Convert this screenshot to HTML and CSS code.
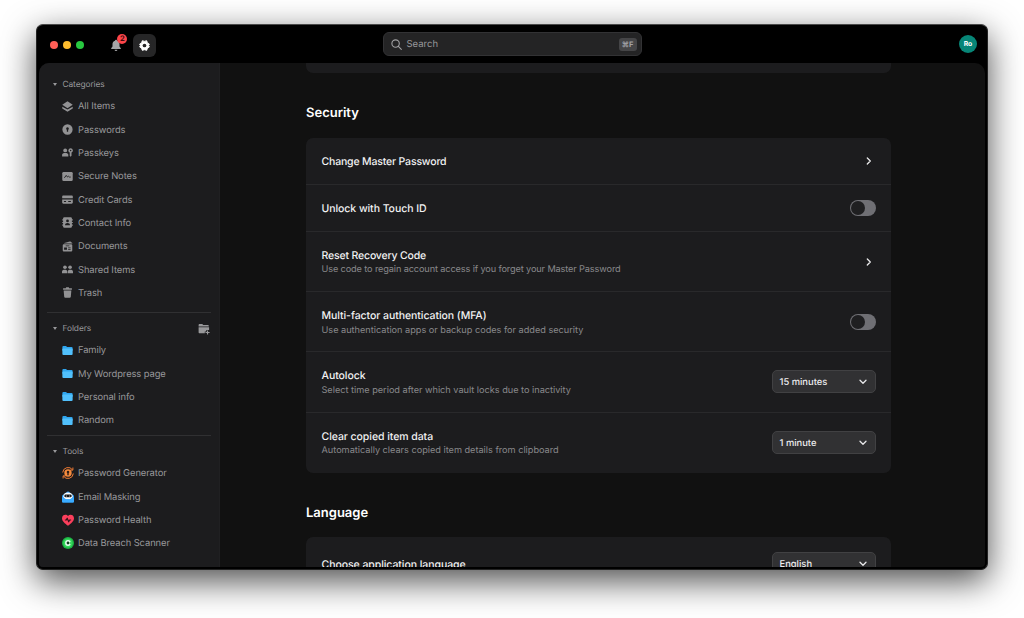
FILE: index.html
```html
<!DOCTYPE html>
<html>
<head>
	<meta charset="utf-8">
	<title>Settings</title>
	<link rel="stylesheet" href="styles.css">
</head>
<body>
<div class="window">
	<div class="topbar">
		<div class="left">
			<span class="dot red"></span>
			<span class="dot yellow"></span>
			<span class="dot green"></span>
			<div class="bell">
				<svg width="12" height="13" viewBox="0 0 12 13"><path fill="#a5a5a7" d="M6 .8c.6 0 1 .4 1 .9 1.600.4 2.500 1.700 2.500 3.300v2.600l1.300 1.700v.7H1.200v-.7l1.300-1.700V5c0-1.600.9-2.900 2.500-3.300 0-.5.4-.9 1-.9zM4.600 10.700h2.800a1.400 1.400 0 0 1-2.800 0z"/></svg>
				<b class="count">2</b>
			</div>
			<div class="gear">
				<svg width="13" height="13" viewBox="0 0 12 12"><path fill="#fff" stroke="#fff" stroke-width=".8" stroke-linejoin="round" d="M4 1.500Q6 2.700 8 1.500Q8.200 3.700 10.500 4.700Q9.100 6 10.500 7.300Q8.200 8.300 8 10.500Q6 9.300 4 10.500Q3.800 8.300 1.500 7.300Q2.900 6 1.500 4.700Q3.800 3.700 4 1.500z"/><circle cx="6" cy="6" r="1.700" fill="#262627"/></svg>
			</div>
		</div>
		<div class="search">
			<svg width="11" height="11" viewBox="0 0 11 11" fill="none" stroke="#a2a2a4" stroke-width="1.100" stroke-linecap="round"><circle cx="4.600" cy="4.600" r="3.700"/><path d="M7.400 7.400l2.900 2.900"/></svg>
			<span>Search</span>
			<b class="key">⌘F</b>
		</div>
		<div class="right"><span class="avatar">Ro</span></div>
	</div>

	<div class="main">
		<div class="sidebar">
			<div class="label"><i class="tri"></i>Categories</div>
			<ul>
				<li><svg viewBox="0 0 12 12"><path d="M6 .4l5.700 3.700L6 7.800.3 4.100z"/><path d="M.3 6.300L6 9.400l5.700-3.100v1.900L6 11.800.3 8.200z"/></svg>All Items</li>
				<li><svg viewBox="0 0 12 12"><path fill-rule="evenodd" d="M6 .4a5.600 5.600 0 1 1 0 11.200A5.600 5.600 0 0 1 6 .4zM6 3.500a1.500 1.500 0 0 0-.7 2.800V8.500h1.400V6.300A1.500 1.500 0 0 0 6 3.500z"/></svg>Passwords</li>
				<li><svg viewBox="0 0 12 12"><circle cx="3.500" cy="3.700" r="2.100"/><path d="M.1 10.300V8.700c0-1.400 1.400-2.100 3.400-2.100s3.400.7 3.400 2.100v1.600z"/><path fill-rule="evenodd" d="M9.400 1.500a2.400 2.400 0 0 1 1 4.600V9.500l-1 1.100-1-1.100V6.100a2.400 2.400 0 0 1 1-4.600zm0 1.400a.8.8 0 1 0 0 1.600.8.8 0 0 0 0-1.600z"/></svg>Passkeys</li>
				<li><svg viewBox="0 0 12 12"><rect x=".3" y="1" width="11.400" height="10" rx="1.500"/><path class="cut" d="M2.600 7.400l2-2.600 1.500 1.800 1-.9 1 .9h1.400"/></svg>Secure Notes</li>
				<li><svg viewBox="0 0 12 12"><path d="M.2 4.600V3c0-.8.5-1.300 1.300-1.300h9c.8 0 1.300.5 1.300 1.300v1.600z"/><path fill-rule="evenodd" d="M.2 5.900h11.600v3.400c0 .8-.5 1.300-1.300 1.300h-9c-.8 0-1.300-.5-1.300-1.300zM2.100 7.700v1h2.300v-1zm4.700 0v1h2.900v-1z"/></svg>Credit Cards</li>
				<li><svg viewBox="0 0 12 12"><path d="M.3 2.500h11.500v1.200H.3zM.3 5.400h11.500v1.200H.3zM.3 8.300h11.500v1.200H.3z"/><rect x="1.200" y=".3" width="9.600" height="11.400" rx="1.400"/><circle cx="6" cy="4.300" r="1.500" fill="#1c1c1e"/><path fill="#1c1c1e" d="M3.300 9c0-1.700 1-2.500 2.700-2.500s2.700.8 2.700 2.500z"/></svg>Contact Info</li>
				<li><svg viewBox="0 0 12 12"><path d="M2.500 2.100L8.500.5c.9-.2 1.400.2 1.600.9l1.200.7v.6H2.300z"/><path fill-rule="evenodd" d="M.8 4.600c0-.7.4-1.100 1.100-1.100h8.200c.7 0 1.100.4 1.100 1.100v5.800c0 .7-.4 1.100-1.100 1.100H1.900c-.7 0-1.100-.4-1.100-1.100zM4 4.800v1h4v-1zm-1.700 2.300v2.500h3.100V7.100zm4.400 0v.9h2.700v-.9zm0 1.700v.8h2.700v-.8z"/></svg>Documents</li>
				<li><svg viewBox="0 0 12 12"><circle cx="3.200" cy="3.500" r="2"/><circle cx="8.800" cy="3.500" r="2"/><path d="M0 10.200V8.500c0-1.400 1.200-2.100 3-2.100s2.700.7 2.700 2.100v1.700zM6.300 10.200V8.500c0-1.400.9-2.100 2.700-2.100s3 .7 3 2.100v1.700z"/></svg>Shared Items</li>
				<li><svg viewBox="0 0 12 12"><path d="M4.100 1.400L4.600.4h2.800l.5 1h2.900v1.600H1.200V1.400zM1.800 3.900h8.400l-.6 6.600c-.1.700-.5 1.100-1.200 1.100H3.600c-.7 0-1.100-.4-1.200-1.100z"/></svg>Trash</li>
			</ul>
			<hr>
			<div class="label"><i class="tri"></i>Folders
				<svg class="add" width="12" height="12" viewBox="0 0 12 12"><path fill="#98989a" d="M.6 2c0-.7.4-1.100 1.100-1.100h2.500l1.100 1.200h4.400c.7 0 1.100.4 1.100 1v.4H.6zM.6 4.200h10.500V7H8.300v1.500H6.800v1.800H1.700c-.7 0-1.100-.4-1.100-1.100zM9 7.500h1.100v1.400h1.500V10h-1.500v1.500H9V10H7.500V8.900H9z"/></svg>
			</div>
			<ul class="folders">
				<li><svg viewBox="0 0 12 12"><path fill="#2fa5ee" d="M.4 2.200c0-.7.400-1.100 1.100-1.100h2.900l1.100 1.200h5c.7 0 1.100.4 1.100 1v3H.4z"/><rect x=".4" y="3.700" width="11.200" height="7.300" rx="1.100" fill="#51c0fc"/></svg>Family</li>
				<li><svg viewBox="0 0 12 12"><path fill="#2fa5ee" d="M.4 2.200c0-.7.400-1.100 1.100-1.100h2.900l1.100 1.200h5c.7 0 1.100.4 1.100 1v3H.4z"/><rect x=".4" y="3.700" width="11.200" height="7.300" rx="1.100" fill="#51c0fc"/></svg>My Wordpress page</li>
				<li><svg viewBox="0 0 12 12"><path fill="#2fa5ee" d="M.4 2.200c0-.7.400-1.100 1.100-1.100h2.900l1.100 1.200h5c.7 0 1.100.4 1.100 1v3H.4z"/><rect x=".4" y="3.700" width="11.200" height="7.300" rx="1.100" fill="#51c0fc"/></svg>Personal info</li>
				<li><svg viewBox="0 0 12 12"><path fill="#2fa5ee" d="M.4 2.200c0-.7.400-1.100 1.100-1.100h2.900l1.100 1.200h5c.7 0 1.100.4 1.100 1v3H.4z"/><rect x=".4" y="3.700" width="11.200" height="7.300" rx="1.100" fill="#51c0fc"/></svg>Random</li>
			</ul>
			<hr class="second">
			<div class="label"><i class="tri"></i>Tools</div>
			<ul class="tools">
				<li><svg viewBox="0 0 12 12"><path fill="none" stroke="#f07b35" d="M10.500 2.800A5.400 5.400 0 0 0 .7 5.500M1.500 9.200a5.400 5.400 0 0 0 9.800-2.700M8.300 3.100h2.600V.5M3.700 8.900H1.100v2.600"/><circle cx="6" cy="6" r="3.700" fill="#f78b3d"/><path fill="#2a1c17" d="M6 3.700a1.300 1.300 0 0 1 .7 2.400v2.100H5.300V6.100A1.300 1.300 0 0 1 6 3.700z"/></svg>Password Generator</li>
				<li><svg viewBox="0 0 12 12"><path fill="#2196f3" d="M6 .2l5.200 3.700c.5.4.8.8.8 1.400v4.900c0 .9-.5 1.400-1.400 1.400H1.400C.5 11.600 0 11.100 0 10.200V5.300c0-.6.3-1 .8-1.400z"/><path fill="#fff" d="M1.300 5.300c0-2.400 1.900-3.800 4.700-3.800s4.700 1.400 4.700 3.800c0 1.900-2 3.300-4.700 3.300S1.300 7.200 1.300 5.300z"/><rect x="2.300" y="3.500" width="7.400" height="2.800" rx="1.400" fill="#16181b"/><circle cx="4.300" cy="4.900" r=".5" fill="#fff"/><circle cx="7.700" cy="4.900" r=".5" fill="#fff"/><path fill="#3aabff" d="M0 6.300l4.300 2.200L6 7.900l1.700.6L12 6.300v3.900c0 .9-.5 1.400-1.400 1.400H1.400C.5 11.600 0 11.100 0 10.200z"/></svg>Email Masking</li>
				<li><svg viewBox="0 0 12 12"><path fill="#fb3f5c" d="M6 2C7.600-.1 12 .6 12 4.200 12 7.200 9 9.500 6 11.700 3 9.500 0 7.200 0 4.200 0 .6 4.400-.1 6 2z"/><path fill="none" stroke="#32131a" stroke-width="1.200" stroke-linejoin="round" d="M2.900 6h1.400l.9-1.800 1.500 3.600.9-1.800h1.500"/></svg>Password Health</li>
				<li><svg viewBox="0 0 12 12"><circle cx="6" cy="6" r="6" fill="#1cb744"/><circle cx="6" cy="6" r="4.600" fill="#35d65c"/><circle cx="6" cy="6" r="2.900" fill="#e8fff0"/><circle cx="6" cy="6" r="1.400" fill="#123d20"/><path fill="#35d65c" d="M7 6l3-2.200v4.400z"/></svg>Data Breach Scanner</li>
			</ul>
		</div>

		<div class="content">
			<div class="card prev"></div>
			<h2>Security</h2>
			<div class="card">
				<div class="row">
					<p class="name tight">Change Master Password</p>
					<svg class="go" width="6" height="8" viewBox="0 0 6 8"><path d="M1.300 1l3 3-3 3"/></svg>
				</div>
				<div class="row">
					<p class="name">Unlock with Touch ID</p>
					<span class="toggle"></span>
				</div>
				<div class="row tall">
					<div>
						<p class="name tight">Reset Recovery Code</p>
						<p class="info tight">Use code to regain account access if you forget your Master Password</p>
					</div>
					<svg class="go" width="6" height="8" viewBox="0 0 6 8"><path d="M1.300 1l3 3-3 3"/></svg>
				</div>
				<div class="row tall">
					<div>
						<p class="name">Multi-factor authentication (MFA)</p>
						<p class="info">Use authentication apps or backup codes for added security</p>
					</div>
					<span class="toggle"></span>
				</div>
				<div class="row tall">
					<div>
						<p class="name">Autolock</p>
						<p class="info">Select time period after which vault locks due to inactivity</p>
					</div>
					<div class="select">15 minutes<svg width="8" height="6" viewBox="0 0 8 6"><path d="M1 1.300l3 3 3-3"/></svg></div>
				</div>
				<div class="row tall">
					<div>
						<p class="name">Clear copied item data</p>
						<p class="info">Automatically clears copied item details from clipboard</p>
					</div>
					<div class="select">1 minute<svg width="8" height="6" viewBox="0 0 8 6"><path d="M1 1.300l3 3 3-3"/></svg></div>
				</div>
			</div>
			<h2>Language</h2>
			<div class="card">
				<div class="row lang">
					<p class="name">Choose application language</p>
					<div class="select">English<svg width="8" height="6" viewBox="0 0 8 6"><path d="M1 1.300l3 3 3-3"/></svg></div>
				</div>
			</div>
		</div>
	</div>
</div>
</body>
</html>
```
FILE: styles.css
```css
*{
	box-sizing:border-box;
}
body{
	margin:0;
	height:618px;
	background:#fff;
	font-family:Inter,"Liberation Sans",sans-serif;
	text-rendering:geometricPrecision;
	overflow:hidden;
	padding:24px 36px;
}
ul,p,h2{
	margin:0;
	padding:0;
	list-style:none;
}
.window{
	width:952px;
	height:546px;
	background:#000;
	border:1px solid #232323;
	border-top-color:#4a4a4a;
	border-radius:7px;
	padding:0 2px 2px;
	display:flex;
	flex-direction:column;
	box-shadow:0 11px 34px rgba(0,0,0,.7);
}
.topbar{
	height:38px;
	flex:none;
	display:grid;
	grid-template-columns:1fr 259px 1fr;
	align-items:center;
}
.left{
	display:flex;
	align-items:center;
	padding-left:10.700px;
	padding-top:2px;
}
.dot{
	width:8px;
	height:8px;
	border-radius:50%;
	margin-right:5px;
}
.red{background:#ff5f57;}
.yellow{background:#febc2e;}
.green{background:#28c840;}
.bell{
	position:relative;
	width:12px;
	height:13px;
	margin-left:21.800px;
	margin-right:10.500px;
}
.bell svg,.gear svg{
	display:block;
}
.count{
	position:absolute;
	left:7px;
	top:-5px;
	width:10px;
	height:10px;
	border-radius:50%;
	background:#fd4549;
	color:#3b0c0d;
	font-size:7.500px;
	line-height:10px;
	text-align:center;
}
.gear{
	width:23px;
	height:23px;
	border-radius:6px;
	background:#262627;
	display:flex;
	align-items:center;
	justify-content:center;
}
.search{
	height:24px;
	background:#242425;
	border:1px solid #323234;
	border-radius:6px;
	display:flex;
	align-items:center;
	padding:0 4px 0 7px;
	font-size:9.500px;
	color:#98989b;
}
.search span{
	margin-left:5px;
	flex:1;
}
.key{
	width:18px;
	height:13px;
	border-radius:3px;
	background:#454547;
	color:#a3a3a6;
	font-size:7.500px;
	line-height:13px;
	text-align:center;
}
.right{
	display:flex;
	justify-content:flex-end;
	padding-right:8px;
}
.avatar{
	width:18px;
	height:18px;
	border-radius:50%;
	background:#078677;
	color:#fff;
	font-size:6.800px;
	font-weight:700;
	line-height:18px;
	text-align:center;
}
.main{
	flex:1;
	min-height:0;
	display:flex;
	background:#111;
	border-radius:10px 10px 4px 4px;
	overflow:hidden;
}
.sidebar{
	width:181px;
	flex:none;
	background:#1c1c1e;
	border-right:1px solid #202022;
	padding:11.800px 8px 0 8px;
}
.label{
	height:20.330px;
	display:flex;
	align-items:center;
	padding-left:6px;
	font-size:8.400px;
	letter-spacing:-.1px;
	color:#98989b;
}
.tri{
	border:2px solid transparent;
	border-top:3px solid #98989b;
	border-bottom:0;
	margin-right:5.500px;
}
.add{
	margin-left:auto;
	margin-right:1px;
}
.sidebar li{
	height:23.330px;
	display:flex;
	align-items:center;
	padding-left:15px;
	font-size:9.400px;
	letter-spacing:-.1px;
	color:#98989b;
}
.sidebar li svg{
	width:11px;
	height:11px;
	margin-right:5px;
	margin-bottom:1px;
	fill:#929294;
}
.sidebar .tools svg{
	width:12px;
	height:12px;
	margin-left:-.5px;
	margin-right:4.500px;
}
.cut{
	fill:none;
	stroke:#1c1c1e;
}
hr{
	height:1px;
	border:0;
	background:#303032;
	margin:7.200px 0 5.500px;
}
hr.second{
	margin:2.600px 0 5.800px;
}
.content{
	width:585px;
	margin-left:86px;
	color:#fff;
}
.card{
	background:#1c1c1e;
	border-radius:7px;
}
.prev{
	height:10px;
	border-radius:0 0 7px 7px;
}
h2{
	height:64.600px;
	padding-top:16px;
	line-height:49px;
	font-size:13px;
	font-weight:600;
}
.row{
	height:47.200px;
	padding:0 15.500px;
	display:flex;
	align-items:center;
	justify-content:space-between;
	border-bottom:1px solid #29292b;
}
.row:last-child{
	border-bottom:0;
}
.tall{
	height:60.200px;
}
.lang{
	height:53px;
}
.name{
	padding-top:1px;
	font-size:10.500px;
	font-weight:500;
	line-height:15px;
	letter-spacing:-.06px;
	color:#f2f2f3;
}
.info{
	padding-top:.5px;
	font-size:9.200px;
	line-height:13px;
	letter-spacing:-.02px;
	color:#88888b;
}
.name.tight{
	letter-spacing:-.17px;
}
.info.tight{
	letter-spacing:-.13px;
}
.go,.select svg{
	fill:none;
	stroke:#e8e8ea;
	stroke-width:1.300;
	stroke-linecap:round;
	stroke-linejoin:round;
}
.go{
	margin-right:4px;
}
.toggle{
	width:26px;
	height:16px;
	border-radius:8px;
	background:#6f6f74;
	padding:1px;
}
.toggle:before{
	content:"";
	display:block;
	width:14px;
	height:14px;
	border-radius:50%;
	background:#1f1f21;
}
.select{
	width:104px;
	height:23px;
	border:1px solid #414143;
	border-radius:5px;
	background:#313133;
	display:flex;
	align-items:center;
	justify-content:space-between;
	padding:1px 8px 0 7px;
	font-size:9.400px;
	font-weight:500;
	color:#ececee;
}
```
